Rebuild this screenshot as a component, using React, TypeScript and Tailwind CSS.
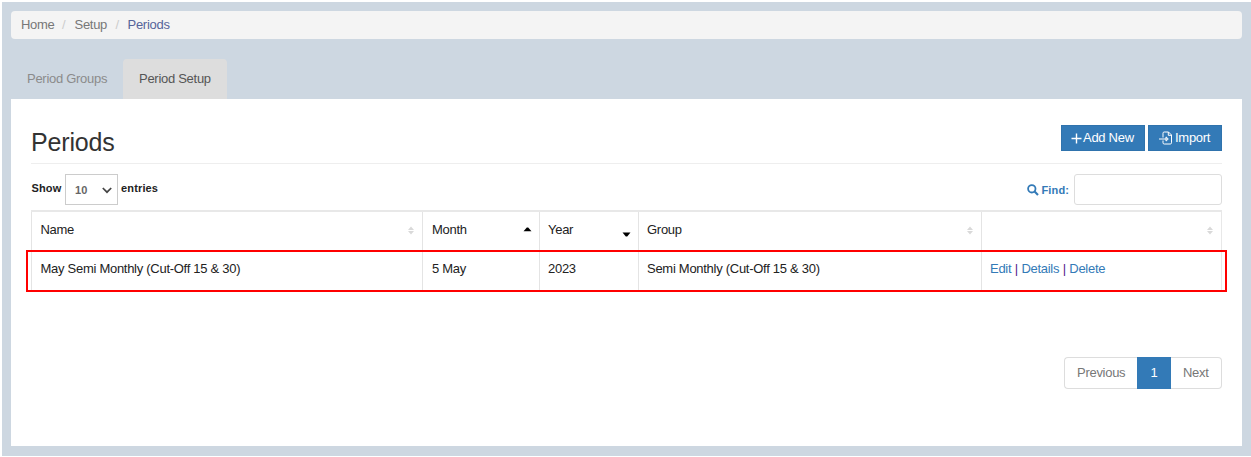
import React from "react";

const CELL = "flex shrink-0 border-l border-[#e4e4e4]";

const COLUMNS = [
  { name: "Name", width: "w-[391px] pl-[8.5px]", value: "May Semi Monthly (Cut-Off 15 & 30)", sort: "none" },
  { name: "Month", width: "w-[117px] pl-[9px]", value: "5 May", sort: "asc" },
  { name: "Year", width: "w-[99px] pl-[8px]", value: "2023", sort: "desc" },
  { name: "Group", width: "w-[343px] pl-[8px]", value: "Semi Monthly (Cut-Off 15 & 30)", sort: "none" },
  { name: "", width: "w-[240px] pl-[8px]", value: null, sort: "none" },
];

function SortIcon({ sort }: { sort: string }) {
  if (sort === "asc") {
    return (
      <svg className="mt-[14px] mr-[7px]" width="9" height="5" viewBox="0 0 9 5">
        <path d="M0.5 4.3 3.8 0.4h1.4L8.5 4.3z" fill="#000" />
      </svg>
    );
  }
  if (sort === "desc") {
    return (
      <svg className="mt-[19px] mr-[7px]" width="9" height="5" viewBox="0 0 9 5">
        <path d="M0.5 0.5h8L5.2 4.4H3.8z" fill="#000" />
      </svg>
    );
  }
  return (
    <svg className="mt-[13px] mr-[7px]" width="8" height="9" viewBox="0 0 8 9">
      <path d="M1 3.9 4 .4l3 3.5zM1 5.1l3 3.5 3-3.5z" fill="#d9d9d9" />
    </svg>
  );
}

function ImportIcon() {
  return (
    <svg width="14" height="14" viewBox="0 0 14 14" fill="none" stroke="#fff" strokeWidth="1">
      <path d="M4 6.5V2.2Q4 1 5.2 1h4.3l3 3v7.8q0 1.2-1.2 1.2H5.2Q4 13 4 11.8V9.5" />
      <path d="M9.3 1v3.3h3.2" />
      <path d="M0 8h8.5M7 5.9 9.3 8 7 10.1z" />
    </svg>
  );
}

export default function App() {
  return (
    <div className="h-[457px] w-[1251px] overflow-hidden bg-white pt-[2px] pl-[2px] font-['Liberation_Sans',Arial,sans-serif] text-[13px] leading-[18px] tracking-[-0.28px] text-[#222]">
      <div className="h-[454px] bg-[#cdd7e1] pt-[9px] pr-[9px] pl-[9px]">
        <nav className="flex h-[28px] items-center rounded-[4px] bg-[#f4f4f4] pl-[10px] text-[#777]">
          <span className="w-[41px]">Home</span>
          <span className="w-[12.5px] text-[#ccc]">/</span>
          <span className="w-[41px]">Setup</span>
          <span className="w-[12px] text-[#ccc]">/</span>
          <span className="text-[#56649a]">Periods</span>
        </nav>

        <div className="mt-[20px] flex h-[40px]">
          <div className="w-[112px] pt-[11px] pl-[16px] text-[#8b8b8b]">Period Groups</div>
          <div className="w-[104px] rounded-t-[4px] bg-[#ddd] pt-[11px] pl-[16px] text-[#555]">Period Setup</div>
        </div>

        <main className="h-[347px] bg-white pl-[20px] pr-[20px]">
          <header className="flex h-[65px] justify-between border-b border-[#eee]">
            <h1 className="pt-[28px] text-[25px] leading-[30px] tracking-[-0.15px] text-[#333]">Periods</h1>
            <div className="flex gap-[3px] pt-[26px] text-white">
              <button className="flex h-[26px] w-[84px] items-center border border-[#2f73ad] bg-[#337ab7] pl-[9px]">
                <svg width="11" height="11" viewBox="0 0 11 11" stroke="#fff" strokeWidth="1.4">
                  <path d="M5.5 .5v10M.5 5.5h10" />
                </svg>
                <span className="ml-[1px]">Add New</span>
              </button>
              <button className="flex h-[26px] w-[74px] items-center border border-[#2f73ad] bg-[#337ab7] pl-[10px]">
                <ImportIcon />
                <span className="ml-[2px]">Import</span>
              </button>
            </div>
          </header>

          <div className="flex h-[46px] justify-between pt-[10px] text-[11px] font-bold tracking-[0.15px]">
            <div className="flex">
              <span className="w-[34px] pt-[5px] pl-[0.5px]">Show</span>
              <div className="flex h-[31px] w-[53px] justify-between border border-[#ccc] pt-[6px] pr-[5px] pl-[9px] text-[#666]">
                10
                <svg className="mt-[6px]" width="10" height="7" viewBox="0 0 10 7" fill="none" stroke="#444" strokeWidth="1.7">
                  <path d="M.8 1 5 5.2 9.2 1" />
                </svg>
              </div>
              <span className="ml-[3px] pt-[5px]">entries</span>
            </div>
            <div className="flex text-[#337ab7]">
              <svg className="mt-[10px]" width="12" height="12" viewBox="0 0 12 12" fill="none" stroke="#337ab7" strokeWidth="1.8">
                <circle cx="4.8" cy="4.8" r="3.7" />
                <path d="m7.6 7.6 3.4 3.4" strokeWidth="2.1" />
              </svg>
              <span className="ml-[2.5px] w-[32.5px] pt-[7px]">Find:</span>
              <div className="h-[31px] w-[148px] rounded-[3px] border border-[#ddd] bg-white" />
            </div>
          </div>

          <section className="relative h-[81px] w-[1191px] border-t-2 border-r border-[#e8e8e8]">
            <div className="flex h-[39px]">
              {COLUMNS.map((c, i) => (
                <div key={i} className={`${CELL} ${c.width} justify-between pt-[1px]`}>
                  <span className="pt-[8px]">{c.name}</span>
                  <SortIcon sort={c.sort} />
                </div>
              ))}
            </div>
            <div className="flex h-[40px] border-t border-b border-[#e6e6e6]">
              {COLUMNS.map((c, i) => (
                <div key={i} className={`${CELL} ${c.width} pt-[8px]`}>
                  {c.value ?? (
                    <div className="flex gap-[3.5px]">
                      <a className="text-[#337ab7]">Edit</a>
                      <span className="text-[#551a8b]">|</span>
                      <a className="text-[#337ab7]">Details</a>
                      <span className="text-[#551a8b]">|</span>
                      <a className="text-[#337ab7]">Delete</a>
                    </div>
                  )}
                </div>
              ))}
            </div>
            <div className="absolute top-[38px] left-[-5px] h-[42px] w-[1201px] border-2 border-[#f00]" />
          </section>

          <div className="mt-[66px] flex justify-end text-[#777]">
            <div className="h-[32px] w-[73px] rounded-l-[4px] border border-r-0 border-[#ddd] pt-[6px] pl-[12px]">Previous</div>
            <div className="h-[32px] w-[34px] bg-[#337ab7] pt-[7px] text-center text-white">1</div>
            <div className="h-[32px] w-[51px] rounded-r-[4px] border border-l-0 border-[#ddd] pt-[6px] pl-[12px]">Next</div>
          </div>
        </main>
      </div>
    </div>
  );
}
